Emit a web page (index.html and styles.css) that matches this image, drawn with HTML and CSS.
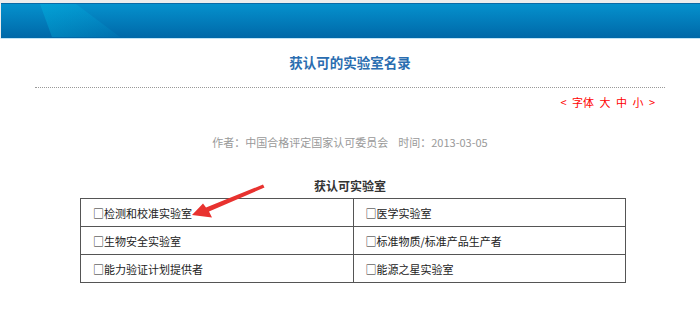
FILE: index.html
```html
<!DOCTYPE html>
<html lang="zh-CN">
<head>
    <meta charset="UTF-8">
    <title>获认可的实验室名录</title>
    <link rel="stylesheet" href="styles.css">
</head>
<body>
    <header class="banner">
        <div class="banner-shine"></div>
    </header>

    <main class="article">
        <h1 class="article-title">获认可的实验室名录</h1>
        <div class="font-size">&lt; 字体 <a href="#">大</a> <a href="#">中</a> <a href="#">小</a> &gt;</div>
        <p class="meta">作者：中国合格评定国家认可委员会<span class="meta-date">时间：2013-03-05</span></p>

        <div class="list-wrap">
            <h2 class="list-title">获认可实验室</h2>
            <table class="lab-table">
                <tr>
                    <td>□检测和校准实验室</td>
                    <td>□医学实验室</td>
                </tr>
                <tr>
                    <td>□生物安全实验室</td>
                    <td>□标准物质/标准产品生产者</td>
                </tr>
                <tr>
                    <td>□能力验证计划提供者</td>
                    <td>□能源之星实验室</td>
                </tr>
            </table>
            <svg class="arrow" width="80" height="40" viewBox="0 0 80 40">
                <path d="M73 1.5 L74.5 4.5 L19 28.5 L22 34.5 L2 32 L13 20.5 L16 24.5 Z" fill="#e8322f"/>
            </svg>
        </div>
    </main>
</body>
</html>
```

FILE: styles.css
```css
* {
    margin: 0;
    padding: 0;
    box-sizing: border-box;
}

body {
    font-family: "Noto Sans CJK SC", "Liberation Sans", sans-serif;
    font-size: 11px;
    color: #333;
    background: #fff;
    width: 700px;
}

.banner {
    position: relative;
    height: 39px;
    background: #eeeeee;
    border-top: 3px solid #ececec;
    overflow: hidden;
}

.banner::before {
    content: "";
    display: block;
    height: 34px;
    margin-left: 1px;
    border-top: 1px solid #0a6aa6;
    border-bottom: 2px solid #bfe4f6;
    background: linear-gradient(#0591cd, #0068a8);
}

.banner-shine {
    position: absolute;
    left: 40px;
    top: 1px;
    width: 80px;
    height: 33px;
    background: linear-gradient(100deg, rgba(0, 190, 230, 0.35), rgba(0, 170, 220, 0.1));
    clip-path: polygon(0 0, 45% 0, 100% 100%, 15% 100%);
}

.article {
    width: 630px;
    margin: 0 auto;
}

.article-title {
    font-size: 13.5px;
    font-weight: bold;
    color: #2a6db0;
    text-align: center;
    padding: 14px 0 16px;
    line-height: 18px;
    border-bottom: 1px dotted #999;
}

.font-size {
    text-align: right;
    color: #f00;
    padding: 6px 10px 0 0;
    line-height: 16px;
    word-spacing: 3px;
}

.font-size a {
    color: #f00;
    text-decoration: none;
}

.meta {
    text-align: center;
    color: #999;
    margin-top: 24px;
    line-height: 16px;
}

.meta-date {
    margin-left: 10px;
}

.list-wrap {
    position: relative;
    margin-top: 27px;
}

.list-title {
    font-size: 12px;
    font-weight: bold;
    color: #333;
    text-align: center;
    line-height: 18px;
    margin-bottom: 3px;
}

.lab-table {
    width: 546px;
    margin-left: 45px;
    border-collapse: collapse;
    border: 1px solid #222;
}

.lab-table td {
    width: 50%;
    height: 28px;
    padding-left: 12px;
    border: 1px solid #555;
    color: #222;
    line-height: 16px;
}

.arrow {
    position: absolute;
    left: 155px;
    top: 6px;
}
```
